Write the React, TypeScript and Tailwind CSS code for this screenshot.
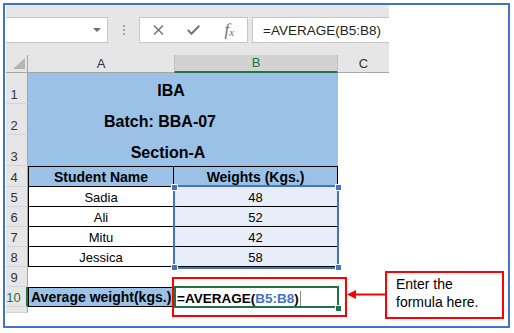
const ROWS = [
  { n: 5, name: "Sadia", w: 48 },
  { n: 6, name: "Ali", w: 52 },
  { n: 7, name: "Mitu", w: 42 },
  { n: 8, name: "Jessica", w: 58 },
];

function RowHead({ n, h, active }: { n?: number; h: string; active?: boolean }) {
  return (
    <div
      className={`${h} w-[22px] shrink-0 bg-[#e6e6e6] border-b border-[#d4d4d4] flex items-end justify-center pr-[5px] text-[13px] leading-[16px] ${
        active ? "border-r-2 border-r-[#217346] text-[#217346]" : "border-r border-r-[#a6a6a6] text-[#333]"
      }`}
    >
      {n}
    </div>
  );
}

function Handle({ x, y }: { x: number; y: number }) {
  return (
    <div
      className="absolute w-[7px] h-[7px] bg-[#4472c4] border border-white"
      style={{ left: x - 3, top: y - 3 }}
    />
  );
}

export default function App() {
  return (
    <div className="relative w-[514px] h-[333px] bg-white overflow-hidden pl-[3px] pt-[3px] font-['Liberation_Sans',Arial,sans-serif] text-black">
      <div className="w-[507px] h-[325px] border-2 border-[#4472c4]">
        <div className="ml-[1px] w-[383px] flex flex-col">
          {/* formula bar */}
          <div className="h-[50px] bg-[#e6e6e6] flex items-start pt-[12px]">
            <div className="w-[102px] h-[26px] bg-white border border-l-0 border-[#c6c6c6] flex items-center justify-end pr-[6px]">
              <div className="w-0 h-0 border-x-[4px] border-x-transparent border-t-[4px] border-t-[#707070]" />
            </div>
            <div className="w-[31px] h-[26px] flex flex-col items-center justify-center gap-[2px]">
              <div className="w-[2px] h-[2px] bg-[#a6a6a6]" />
              <div className="w-[2px] h-[2px] bg-[#a6a6a6]" />
              <div className="w-[2px] h-[2px] bg-[#a6a6a6]" />
            </div>
            <div className="w-[109px] h-[26px] bg-white border border-[#c6c6c6] flex items-center pl-[1px]">
              <div className="w-[36px] flex justify-center">
                <svg width="11" height="10" viewBox="0 0 11 10">
                  <path d="M1 0.5 L10 9.5 M10 0.5 L1 9.5" stroke="#767676" strokeWidth="1.5" />
                </svg>
              </div>
              <div className="w-[36px] flex justify-center">
                <svg width="13" height="10" viewBox="0 0 13 10">
                  <path d="M0.8 5 L4.5 8.8 L12.2 0.8" stroke="#767676" strokeWidth="2" fill="none" />
                </svg>
              </div>
              <div className="w-[36px] flex justify-center items-end font-['Liberation_Serif',serif] italic text-[#6f6f6f]">
                <span className="text-[17px] leading-[18px]">f</span>
                <span className="text-[11px] leading-[13px]">x</span>
              </div>
            </div>
            <div className="w-[4px]" />
            <div className="flex-1 h-[26px] bg-white border border-r-0 border-[#c6c6c6] flex items-center pl-[10px] pt-[2px] text-[13.5px] text-[#222]">
              =AVERAGE(B5:B8)
            </div>
          </div>

          {/* column headers */}
          <div className="h-[18px] flex bg-[#e6e6e6] text-[13px] text-[#333]">
            <div className="w-[22px] relative border-r border-b border-[#a6a6a6]">
              <svg className="absolute left-[7px] top-[3px]" width="12" height="11" viewBox="0 0 12 11">
                <path d="M12 0 L12 11 L0 11 Z" fill="#b4b4b4" />
              </svg>
            </div>
            <div className="w-[146px] border-b border-[#a6a6a6] flex items-center justify-center">A</div>
            <div className="w-[164px] bg-[#d2d2d2] border-x border-x-[#bdbdbd] border-b-2 border-b-[#217346] flex items-center justify-center text-[#217346]">
              B
            </div>
            <div className="flex-1 border-b border-[#a6a6a6] flex items-center justify-center">C</div>
          </div>

          {/* rows 1-3 merged */}
          <div className="flex">
            <div className="flex flex-col">
              <RowHead n={1} h="h-[31px]" />
              <RowHead n={2} h="h-[31px]" />
              <RowHead n={3} h="h-[31px]" />
            </div>
            <div className="w-[310px] h-[93px] bg-[#9bc2e6] flex flex-col font-bold text-[16px] leading-[20px]">
              <div className="h-[31px] flex items-end justify-center pb-[3px] pr-[24px]">IBA</div>
              <div className="h-[31px] flex items-end justify-center pb-[3px] pr-[46px]">Batch: BBA-07</div>
              <div className="h-[31px] flex items-end justify-center pb-[3px] pr-[30px]">Section-A</div>
            </div>
          </div>

          {/* row 4 */}
          <div className="flex">
            <RowHead n={4} h="h-[21px]" />
            <div className="w-[146px] h-[21px] bg-[#9bc2e6] border border-black flex items-end justify-center font-bold text-[14px] leading-[17px]">
              Student Name
            </div>
            <div className="w-[164px] h-[21px] bg-[#9bc2e6] border-y border-r border-black flex items-end justify-center font-bold text-[14px] leading-[17px]">
              Weights (Kgs.)
            </div>
          </div>

          {/* rows 5-8 */}
          {ROWS.map((r) => (
            <div key={r.n} className="flex text-[13px] leading-[16px]">
              <RowHead n={r.n} h="h-[20px]" />
              <div className="w-[146px] h-[20px] border-x border-b border-black flex items-end justify-center">{r.name}</div>
              <div className="w-[164px] h-[20px] bg-[#e7eef9] border-r border-b border-black flex items-end justify-center">{r.w}</div>
            </div>
          ))}

          {/* row 9 */}
          <div className="flex">
            <RowHead n={9} h="h-[20px]" />
          </div>

          {/* row 10 */}
          <div className="flex">
            <RowHead n={10} h="h-[20px]" active />
            <div className="w-[146px] h-[20px] bg-[#9bc2e6] border border-black flex items-end pl-[2px] font-bold text-[14px] leading-[17px] whitespace-nowrap">
              Average weight(kgs.)
            </div>
            <div className="w-[164px] h-[20px] flex items-end pl-[3px] font-bold text-[13.5px] leading-[16px] whitespace-nowrap">
              <span>=AVERAGE(</span>
              <span className="text-[#4472c4]">B5:B8</span>
              <span>)</span>
              <span className="ml-[1px] mb-[1px] w-[1px] h-[15px] bg-[#8a8a8a]" />
            </div>
          </div>

          {/* row 11 (partial) */}
          <div className="flex">
            <RowHead h="h-[6px]" />
          </div>
        </div>
      </div>

      {/* range highlight B5:B8 */}
      <div className="absolute left-[173px] top-[185px] w-[166px] h-[84px] border-2 border-[#4472c4]" />
      <Handle x={174} y={187} />
      <Handle x={338} y={187} />
      <Handle x={174} y={267} />
      <Handle x={338} y={267} />

      {/* active cell B10 */}
      <div className="absolute left-[174px] top-[286px] w-[165px] h-[22px] border-2 border-[#217346]" />
      <div className="absolute left-[335px] top-[305px] w-[5px] h-[5px] bg-[#217346] border border-white box-content" />

      {/* red highlight */}
      <div className="absolute left-[172px] top-[277px] w-[175px] h-[40px] border-2 border-[#ff0000]" />

      {/* arrow */}
      <svg className="absolute left-[346px] top-[289px]" width="40" height="11" viewBox="0 0 40 11">
        <path d="M8 5.5 L40 5.5" stroke="#ff0000" strokeWidth="2" />
        <path d="M1 5.5 L10 1 L10 10 Z" fill="#ff0000" />
      </svg>

      {/* callout */}
      <div className="absolute left-[385px] top-[271px] w-[119px] h-[48px] border-2 border-[#ff0000] bg-white pl-[9px] pt-[3px] text-[14px] leading-[17.5px]">
        <div>Enter the</div>
        <div>formula here.</div>
      </div>
    </div>
  );
}
